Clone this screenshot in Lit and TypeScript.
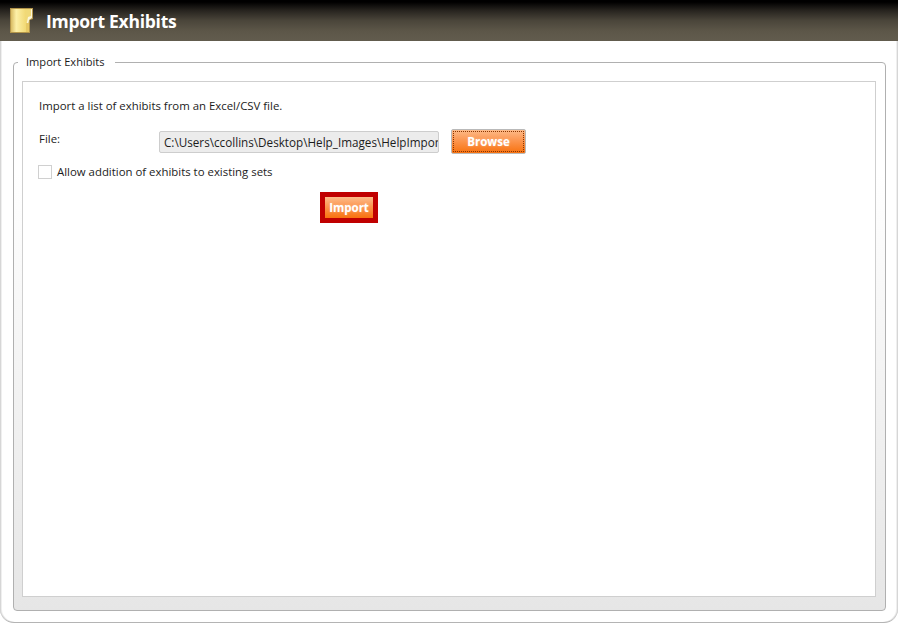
import { LitElement, html, css } from "lit";
import { customElement } from "lit/decorators.js";

@customElement("app-root")
export class AppRoot extends LitElement {
  static styles = css`
    :host { display: block; width: 898px; height: 626px; background: #fff; font-family: "Open Sans", "Noto Sans", sans-serif; font-size: 11.4px; color: #1c1c1c; overflow: hidden; }
    * { box-sizing: border-box; }
    .window { height: 623px; display: flex; flex-direction: column; border-bottom: 1px solid #b4b4b4; border-radius: 0 0 14px 14px; box-shadow: inset 1px 0 0 #d6d6d6, inset 2px 0 0 #efefef, inset -1px 0 0 #d6d6d6, inset -2px 0 0 #efefef; }
    .header { height: 41px; flex: none; display: flex; align-items: center; gap: 13px; padding: 0 0 0 10px; background: linear-gradient(180deg, #000 0%, #000 5%, #26231e 25%, #4a453a 50%, #5c5648 75%, #625c4e 100%); }
    .header svg { flex: none; }
    .title { font-family: "Open Sans", sans-serif; font-size: 17.5px; font-weight: 700; color: #fff; letter-spacing: -0.27px; }
    .body { flex: 1; display: flex; padding: 13px 12px 11px 13px; min-height: 0; }
    fieldset { flex: 1; margin: 0; min-width: 0; display: flex; padding: 11px 9px 13px 8px; border: 1px solid #b0b0b0; border-radius: 4px; background: linear-gradient(180deg, #fff 0%, #fff 20%, #e6e6e6 100%); }
    legend { margin-left: -4px; padding: 0 10px 0 8px; font-size: 11.1px; line-height: 16px; background: #fff; }
    .panel { flex: 1; background: #fff; border: 1px solid #cfcfcf; padding: 16px 15px 16px 16px; }
    .intro { line-height: 16px; }
    .file-row { display: flex; align-items: flex-start; margin-top: 15px; height: 25px; }
    .file-label { width: 120px; flex: none; line-height: 16px; margin-top: 2px; }
    .path { width: 280px; height: 22px; margin-top: 2px; flex: none; border: 1px solid #cdcdcd; border-radius: 2px; background: #ececec; padding: 0 3px 0 4px; font-size: 11.7px; line-height: 20px; white-space: nowrap; overflow: hidden; }
    .btn { font-family: "Open Sans", sans-serif; font-weight: 700; font-size: 11.5px; color: #fff; text-shadow: 0 0 2px #fff6; background: linear-gradient(180deg, #fdbb8a 0%, #fc9650 45%, #f8720f 100%); border: none; padding: 0; display: flex; align-items: center; justify-content: center; }
    .browse { width: 75px; height: 25px; margin-left: 12px; border: 1px solid #b9b9b9; border-radius: 2px; position: relative; }
    .browse::after { content: ""; position: absolute; inset: 1px; border: 1px dotted #8a3500; }
    .check-row { display: flex; align-items: center; gap: 5px; margin: 10px 0 0 -1px; height: 16px; line-height: 16px; }
    .box { width: 14px; height: 14px; flex: none; border: 1px solid #d0d0d0; background: #fff; }
    .import-wrap { margin: 12px 0 0 281px; width: 58px; height: 31px; border: 5px solid #c00000; }
    .import { width: 48px; height: 21px; }
  `;

  render() {
    return html`
      <div class="window">
        <header class="header">
          <svg width="23" height="25" viewBox="0 0 23 25">
            <defs>
              <linearGradient id="f" x1="0" y1="0" x2="1" y2="0">
                <stop offset="0" stop-color="#d9bb62" /><stop offset="0.35" stop-color="#fdf0a8" /><stop offset="1" stop-color="#f1d873" />
              </linearGradient>
            </defs>
            <path d="M0 0h23v11l-3 1v13H0z" fill="#b3954a" />
            <path d="M1 1h15v23H1z" fill="url(#f)" />
            <path d="M16 1h5v8l-2 1-1 5h-2z" fill="#f0d978" />
            <path d="M21 1h1v9l-3 2-1 6h-2l1-4 1-5 3-1z" fill="#fbf6d8" />
            <path d="M16 15h3v9h-3z" fill="#e6c865" />
          </svg>
          <span class="title">Import Exhibits</span>
        </header>
        <div class="body">
          <fieldset>
            <legend>Import Exhibits</legend>
            <div class="panel">
              <div class="intro">Import a list of exhibits from an Excel/CSV file.</div>
              <div class="file-row">
                <div class="file-label">File:</div>
                <div class="path">C:\\Users\\ccollins\\Desktop\\Help_Images\\HelpImport</div>
                <button class="btn browse">Browse</button>
              </div>
              <div class="check-row"><span class="box"></span><span>Allow addition of exhibits to existing sets</span></div>
              <div class="import-wrap"><button class="btn import">Import</button></div>
            </div>
          </fieldset>
        </div>
      </div>
    `;
  }
}
